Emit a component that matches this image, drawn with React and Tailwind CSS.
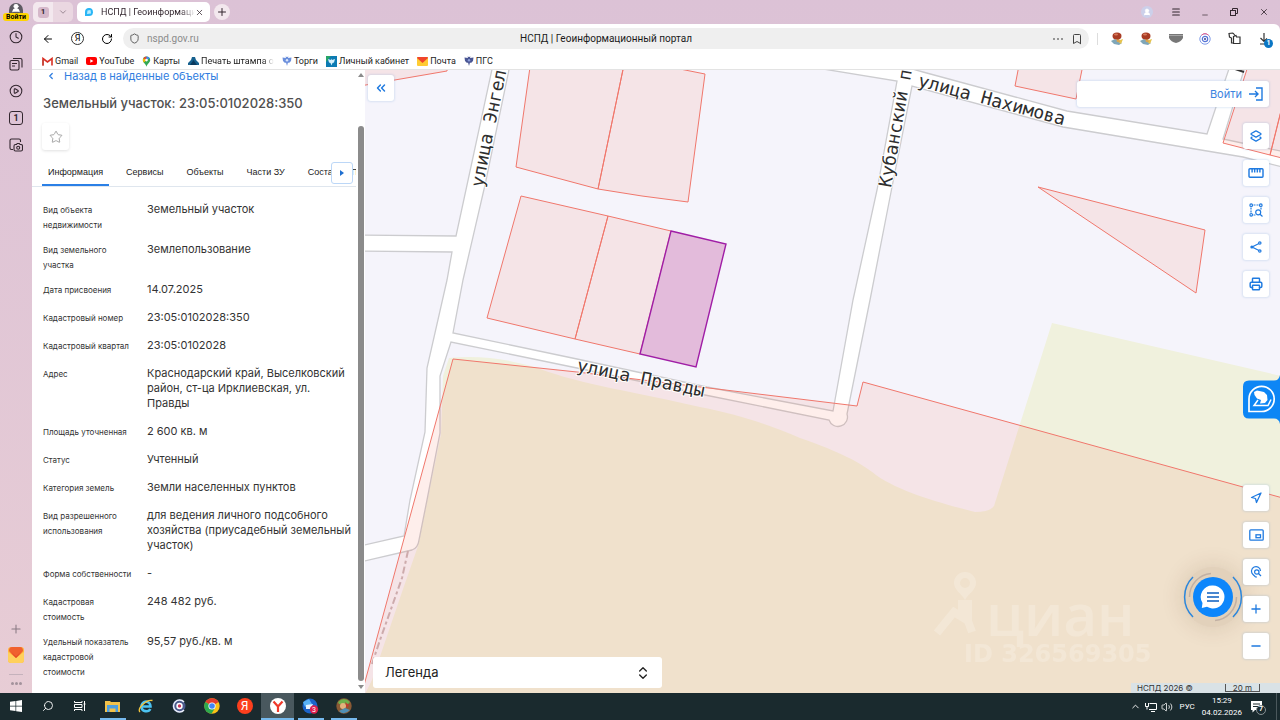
import React from "react";
import {
  ArrowLeft, RotateCw, Shield, Bookmark, X, Plus, ChevronDown, ChevronLeft, ChevronsLeft, ChevronUp, ChevronsUpDown,
  Clock, CirclePlay, Menu, Minus, Star, Layers2, Printer, Navigation, Search,
  Volume2, UserRound,
} from "lucide-react";

const bookmarks = [
  { name: "Gmail", icon: <GmailIcon /> },
  { name: "YouTube", icon: <YouTubeIcon /> },
  { name: "Карты", icon: <PinIcon /> },
  { name: "Печать штампа о", icon: <TentIcon />, fade: true },
  { name: "Торги", icon: <EagleIcon /> },
  { name: "Личный кабинет", icon: <CabinetIcon /> },
  { name: "Почта", icon: <MailIcon /> },
  { name: "ПГС", icon: <EagleIcon dark /> },
];

const facts = [
  ["Вид объекта недвижимости", "Земельный участок"],
  ["Вид земельного участка", "Землепользование"],
  ["Дата присвоения", "14.07.2025"],
  ["Кадастровый номер", "23:05:0102028:350"],
  ["Кадастровый квартал", "23:05:0102028"],
  ["Адрес", "Краснодарский край, Выселковский район, ст-ца Ирклиевская, ул. Правды"],
  ["Площадь уточненная", "2 600 кв. м"],
  ["Статус", "Учтенный"],
  ["Категория земель", "Земли населенных пунктов"],
  ["Вид разрешенного использования", "для ведения личного подсобного хозяйства (приусадебный земельный участок)"],
  ["Форма собственности", "-"],
  ["Кадастровая стоимость", "248 482 руб."],
  ["Удельный показатель кадастровой стоимости", "95,57 руб./кв. м"],
];

function GmailIcon() {
  return (
    <svg viewBox="0 0 11 9" className="h-[9px] w-[11px]">
      <path d="M1 8.500V1.500L5.500 5L10 1.500V8.500" fill="none" stroke="#d93025" strokeWidth="1.600" />
      <path d="M1 8.500V3" stroke="#c5483c" strokeWidth="1.600" />
    </svg>
  );
}
function YouTubeIcon() {
  return (
    <svg viewBox="0 0 11 8" className="h-2 w-[11px]">
      <rect width="11" height="8" rx="2" fill="#f00" />
      <path d="M4.300 2.200v3.600L7.400 4z" fill="#fff" />
    </svg>
  );
}
function PinIcon() {
  return (
    <svg viewBox="0 0 9 11" className="h-[11px] w-[9px]">
      <path d="M4.500 0.500A3.700 3.700 0 0 0 .8 4.200C.8 6.500 3.800 7.500 4.500 10.700C5.200 7.500 8.200 6.500 8.200 4.200A3.700 3.700 0 0 0 4.500.5z" fill="#34a853" />
      <path d="M4.500.5A3.700 3.700 0 0 0 1.300 2.300L4.500 4.200z" fill="#ea4335" />
      <path d="M4.500.5L4.500 4.200L7.700 2.300A3.700 3.700 0 0 0 4.500.5z" fill="#4285f4" />
      <path d="M1.300 2.300A3.700 3.700 0 0 0 1.700 6.500L4.500 4.200z" fill="#fbbc04" />
      <circle cx="4.500" cy="4.100" r="1.300" fill="#fff" />
    </svg>
  );
}
function TentIcon() {
  return (
    <svg viewBox="0 0 11 8" className="h-2 w-[11px]">
      <path d="M0 8V6L3 3L4 0H7L8 3L11 6V8z" fill="#17618f" />
      <path d="M2 8L5.500 3L9 8z" fill="#0b3a5e" />
    </svg>
  );
}
function EagleIcon({ dark }) {
  return (
    <svg viewBox="0 0 10 10" className="h-[10px] w-[10px]">
      <path
        d="M5 1L6.500 0.500L6 2L9.500 1.500L9 5L7 7L6 6.500L5 10L4 6.500L3 7L1 5L.5 1.500L4 2L3.500.5z"
        fill={dark ? "#4a5694" : "#6b8fdc"}
      />
      <circle cx="5" cy="4.300" r="1.200" fill={dark ? "#8ea0dc" : "#dbe6fb"} />
    </svg>
  );
}
function CabinetIcon() {
  return (
    <svg viewBox="0 0 11 11" className="h-[11px] w-[11px]">
      <rect width="11" height="11" fill="#0c7bb3" />
      <path d="M0 0H5L0 6z" fill="#27a567" />
      <path d="M2 3L5 4L5.500 2.500L6 4L9 3L8 6.500L6.500 7L5.500 9.500L4.500 7L3 6.500z" fill="#d5f0fb" />
    </svg>
  );
}
function MailIcon() {
  return (
    <svg viewBox="0 0 11 9" className="h-[9px] w-[11px]">
      <rect width="11" height="9" rx="1" fill="#ffcc33" />
      <path d="M0 1Q0 0 1 0H10Q11 0 11 1L5.500 6z" fill="#f0452c" />
    </svg>
  );
}

function IconButton({ label, className = "", children }) {
  return (
    <button type="button" aria-label={label} className={`flex items-center justify-center ${className}`}>
      {children}
    </button>
  );
}

function SideRail() {
  return (
    <aside className="flex w-8 shrink-0 flex-col items-center pt-[3px] pb-2 text-[#33272f]">
      <button type="button" aria-label="Войти в браузер" className="flex h-[18px] flex-col items-center">
        <span className="flex h-[10px] w-[14px] items-end justify-center overflow-hidden rounded-t-full bg-[#5d5a62]">
          <UserRound className="size-[10px] fill-white text-white" />
        </span>
        <span className="rounded-[3px] bg-[#ffd400] px-[3px] text-[7px] leading-2 font-bold text-black">Войти</span>
      </button>
      <nav className="mt-[9px] flex flex-col gap-[13px]">
        <IconButton label="История"><Clock className="size-[14px]" strokeWidth={1.8} /></IconButton>
        <IconButton label="Коллекции">
          <svg viewBox="0 0 14 14" className="size-[14px]" fill="none" stroke="currentColor" strokeWidth="1.100">
            <rect x="1" y="3.500" width="9" height="9.500" rx="1.500" />
            <path d="M4 1.500H11.500Q13 1.500 13 3V10.500M3 6.500H8M3 9H6" />
          </svg>
        </IconButton>
        <IconButton label="Видео"><CirclePlay className="size-[14px]" strokeWidth={1.8} /></IconButton>
        <button type="button" className="flex size-[14px] items-center justify-center rounded-[3px] border border-[#33272f] text-[9px] leading-none font-bold">1</button>
        <IconButton label="Скриншот">
          <svg viewBox="0 0 14 14" className="size-[14px]" fill="none" stroke="currentColor" strokeWidth="1.100">
            <path d="M4 11.500H2.500Q1 11.500 1 10V2.500Q1 1 2.500 1H10Q11.500 1 11.500 2.500V4" />
            <path d="M6.500 6.500H7.500L8.200 5.500H10.300L11 6.500H12Q13.500 6.500 13.500 8V11.500Q13.500 13 12 13H6.500Q5 13 5 11.500V8Q5 6.500 6.500 6.500z" />
            <circle cx="9.200" cy="9.700" r="1.500" />
          </svg>
        </IconButton>
      </nav>
      <div className="flex-1" />
      <div className="flex flex-col items-center gap-[11px] text-[#8a7a84]">
        <IconButton label="Добавить"><Plus className="size-[14px]" strokeWidth={1.8} /></IconButton>
        <IconButton label="Почта">
          <svg viewBox="0 0 16 16" className="size-4">
            <rect width="16" height="16" rx="3" fill="#ffb83f" />
            <path d="M1 4Q1 0 4 0H12Q15 0 15 4L8 12z" fill="#f0602f" />
            <path d="M0 5L8 11L16 5V13Q16 16 13 16H3Q0 16 0 13z" fill="#ffd05c" />
            <path d="M3 4.500L8 9.500L13 4.500L8 11z" fill="#e34a25" />
          </svg>
        </IconButton>
        <div className="flex flex-col items-center gap-[7px]">
          <span className="h-px w-[14px] bg-[#c5b2bc]" />
          <span className="flex gap-px">
            <i className="size-[3px] rounded-full bg-[#a3929c]" />
            <i className="size-[3px] rounded-full bg-[#a3929c]" />
            <i className="size-[3px] rounded-full bg-[#a3929c]" />
          </span>
        </div>
      </div>
    </aside>
  );
}

function TabStrip() {
  return (
    <div className="flex h-6 items-center pl-px text-[#33272f]">
      <div className="flex h-5 overflow-hidden rounded-[5px] bg-[#ead7e1]">
        <button type="button" className="flex w-5 items-center justify-center bg-[#f3e8ee] text-[8px] font-bold">
          <span className="flex size-[11px] items-center justify-center rounded-[3px] bg-[#d5b8ca]">1</span>
        </button>
        <IconButton label="Группы вкладок" className="w-5"><ChevronDown className="size-[10px] text-[#8d7b86]" /></IconButton>
      </div>
      <div className="ml-1 flex h-5 w-[133px] items-center rounded-[5px] bg-white pr-[6px] pl-[7px]">
        <svg viewBox="0 0 10 10" className="size-[10px] shrink-0">
          <path d="M1 9V4.500A4 4 0 1 1 5 9z" fill="#29b6f6" />
          <path d="M3 7L7 6.500L6.500 3L3.500 3.500z" fill="#b9ecff" />
        </svg>
        <span className="ml-[7px] flex-1 overflow-hidden mask-r-from-85% text-[9px] leading-4 whitespace-nowrap">НСПД | Геоинформаци</span>
        <IconButton label="Закрыть вкладку"><X className="size-[9px]" /></IconButton>
      </div>
      <IconButton label="Новая вкладка" className="ml-1 size-4 rounded-full bg-[#f3e8ee]"><Plus className="size-3" /></IconButton>
      <div className="ml-auto flex items-center">
        <IconButton label="Профиль" className="w-[29px]">
          <span className="flex size-3 items-center justify-center rounded-full bg-[#ccd0ea]"><UserRound className="size-2 fill-white text-white" /></span>
        </IconButton>
        <IconButton label="Меню" className="w-[29px]"><Menu className="size-[10px]" strokeWidth={2.5} /></IconButton>
        <IconButton label="Свернуть" className="w-[29px] pt-[5px]"><Minus className="size-2" /></IconButton>
        <IconButton label="Восстановить" className="w-[29px]">
          <svg viewBox="0 0 8 8" className="size-2" fill="none" stroke="currentColor"><rect x=".5" y="2.500" width="5" height="5" /><path d="M2.500 2.500V.5H7.500V5.500H5.500" /></svg>
        </IconButton>
        <IconButton label="Закрыть" className="w-[32px]"><X className="size-[10px]" /></IconButton>
      </div>
    </div>
  );
}

function StampIcon() {
  return (
    <svg viewBox="0 0 14 14" className="size-[14px]">
      <path d="M1 9L5 7L12 11L9 13L4 12z" fill="#7fa6b8" />
      <path d="M7 9L13 7L11 12z" fill="#e7c34c" />
      <path d="M6 6H9L10 10H7z" fill="#d8a552" />
      <ellipse cx="7" cy="4" rx="4.500" ry="3.600" fill="#a93c24" />
      <ellipse cx="6" cy="2.600" rx="2" ry="1" fill="#d77a5c" />
    </svg>
  );
}

function AddressBar() {
  return (
    <div className="flex h-[29px] items-center pl-[9px]">
      <IconButton label="Назад" className="size-[14px]"><ArrowLeft className="size-3" /></IconButton>
      <button type="button" className="ml-4 flex size-[13px] items-center justify-center rounded-full border border-[#333] text-[9px] leading-none">Я</button>
      <IconButton label="Обновить" className="ml-4 size-[14px]"><RotateCw className="size-3" /></IconButton>
      <div className="ml-[9px] grid h-[21px] flex-1 grid-cols-[1fr_auto_1fr] items-center rounded-full bg-[#efefef] px-[6px]">
        <label className="flex items-center gap-[7px]">
          <Shield className="size-[11px] text-[#555]" />
          <input aria-label="Адрес" defaultValue="nspd.gov.ru" className="w-40 bg-transparent text-[10px] leading-4 text-[#8b8b8b] outline-none" />
        </label>
        <span className="text-[10px] leading-4 text-[#1a1a1a]">НСПД | Геоинформационный портал</span>
        <div className="flex items-center justify-end gap-2 text-[#444]">
          <span className="flex gap-[2px]"><i className="size-[2px] rounded-full bg-[#777]" /><i className="size-[2px] rounded-full bg-[#777]" /><i className="size-[2px] rounded-full bg-[#777]" /></span>
          <IconButton label="В закладки"><Bookmark className="size-3" /></IconButton>
        </div>
      </div>
      <span className="ml-2 h-3 w-px bg-[#ddd]" />
      <div className="mr-[2px] ml-1 flex items-center text-[#333]">
        <IconButton label="Штамп" className="w-[29px]"><StampIcon /></IconButton>
        <IconButton label="Штамп 2" className="w-[30px]"><StampIcon /></IconButton>
        <IconButton label="Карман" className="w-[29px]">
          <svg viewBox="0 0 14 9" className="h-[9px] w-[14px]"><path d="M0 0H14V4Q12 8 7 9Q2 8 0 4z" fill="#777" /><path d="M0 1.500H14" stroke="#a5a5a5" /></svg>
        </IconButton>
        <IconButton label="Алиса" className="w-[29px]">
          <svg viewBox="0 0 12 12" className="size-3" fill="none"><circle cx="6" cy="6" r="5.200" stroke="#7f9be8" /><path d="M2.500 2.200A5.200 5.200 0 0 1 9.500 2.200" stroke="#ef5d87" /><circle cx="6" cy="6" r="2.700" stroke="#5674d6" strokeWidth="1.200" /><circle cx="6" cy="6" r="1" fill="#3d3f8f" /></svg>
        </IconButton>
        <IconButton label="Расширения" className="w-[30px]">
          <svg viewBox="0 0 13 13" className="size-[13px]" fill="none" stroke="currentColor" strokeWidth="1.200"><path d="M5.500 4.500L8 3.500L8.500 5H12V11.500H5.500zM5 1L1 1.500L1.500 5L3.500 6V11H5.500M5 1L7 3.500" /></svg>
        </IconButton>
        <button type="button" aria-label="Загрузки" className="relative flex w-[29px] items-center justify-center">
          <svg viewBox="0 0 12 12" className="size-3" fill="none" stroke="currentColor" strokeWidth="1.200"><path d="M6 0V8M2.500 5L6 8.500L9 5.500M2 11H7" /></svg>
          <span className="absolute -bottom-[3px] left-[15px] flex size-[9px] items-center justify-center rounded-full bg-[#0a76c4] text-[7px] font-bold text-white">1</span>
        </button>
      </div>
    </div>
  );
}

function Bookmarks() {
  return (
    <nav className="flex h-[17px] items-center gap-2 border-b border-[#e3e3e3] pl-[10px] text-[9px] leading-4 text-[#1c1c1c]">
      {bookmarks.map((b) => (
        <a key={b.name} href="#" className="flex items-center gap-[2px] whitespace-nowrap">
          {b.icon}
          <span className={b.fade ? "mask-r-from-85%" : ""}>{b.name}</span>
        </a>
      ))}
    </nav>
  );
}

function ObjectPanel() {
  return (
    <section className="flex w-[333px] shrink-0 bg-white font-['Inter',sans-serif]">
      <div className="flex min-w-0 flex-1 flex-col overflow-hidden">
        <a href="#" className="ml-[14px] flex h-3 items-center gap-2 text-[11px] leading-3 text-[#2f7de0]">
          <ChevronLeft className="size-[10px]" strokeWidth={3} />
          Назад в найденные объекты
        </a>
        <h1 className="mt-[11px] ml-[11px] text-[13px] leading-5 font-medium text-[#505050]">Земельный участок: 23:05:0102028:350</h1>
        <IconButton label="В избранное" className="mt-[10px] ml-[10px] size-[27px] rounded-[3px] text-[#9a9a9a] shadow-[0_1px_3px_rgba(0,0,0,0.12)]">
          <Star className="size-[14px]" strokeWidth={1.5} />
        </IconButton>
        <div className="relative mt-2 border-b border-[#dfe6ee]">
          <div role="tablist" className="flex gap-[11px] overflow-hidden pl-[10px] font-['Liberation_Sans',sans-serif] text-[9px] leading-[12px] whitespace-nowrap text-[#222]">
            <button type="button" role="tab" aria-selected="true" className="border-b-2 border-[#2b80e6] px-[6px] pt-2 pb-[6px]">Информация</button>
            <button type="button" role="tab" className="px-[6px] pt-2 pb-2">Сервисы</button>
            <button type="button" role="tab" className="px-[6px] pt-2 pb-2">Объекты</button>
            <button type="button" role="tab" className="px-[6px] pt-2 pb-2">Части ЗУ</button>
            <button type="button" role="tab" className="px-[6px] pt-2 pb-2">Состав ЕЗП</button>
          </div>
          <IconButton label="Ещё вкладки" className="absolute top-1 right-[3px] size-[22px] rounded-[3px] border border-[#bcd7f7] bg-white">
            <svg viewBox="0 0 4 6" className="h-[6px] w-1"><path d="M0 0L4 3L0 6z" fill="#1f6fd0" /></svg>
          </IconButton>
        </div>
        <dl className="mt-[15px] flex flex-col gap-[10px] pl-[11px] text-[#333]">
          {facts.map(([k, v]) => (
            <div key={k} className="flex">
              <dt className="-mb-px w-[104px] shrink-0 pt-px pr-[14px] text-[8px] leading-[15px]">{k}</dt>
              <dd className="w-[205px] pb-[3px] text-[11px] leading-[15px]">{v}</dd>
            </div>
          ))}
        </dl>
      </div>
      <div aria-hidden="true" className="flex w-[9px] flex-col items-center pt-[3px] pb-1">
        <svg viewBox="0 0 6 4" className="h-1 w-[6px]"><path d="M0 4L3 0L6 4z" fill="#8b8b8b" /></svg>
        <div className="mt-[49px] w-[6px] flex-1 rounded-full bg-[#8b8b8b]" />
        <svg viewBox="0 0 6 4" className="mt-1 h-1 w-[6px]"><path d="M0 0L3 4L6 0z" fill="#8b8b8b" /></svg>
      </div>
    </section>
  );
}

function MapCanvas() {
  const parcel = { fill: "rgba(245,85,60,0.1)", stroke: "#f0776c", strokeWidth: 1 };
  return (
    <svg viewBox="365 70 915 623" preserveAspectRatio="xMinYMin slice" className="absolute inset-0 h-full w-full bg-[#f5f4fb]">
      <path
        d="M1052 323L1290 378V700H362L372 680L402 592L418 546L441 434L443 376L449 358C480 355 510 359 540 369C580 384 640 393 700 407C740 415 770 425 800 438C840 452 860 462 876 475C900 492 940 503 975 512Q990 512 994 506z"
        fill="#f0f1dd"
      />
      <path
        d="M494 60L456 236L360 235V251L452 252L447 280L427 368L425 432L410 500L404 536L360 546V562L412 550Q418 548 419 540L427 500L440 433V376L451 342L577 368L700 394L829 420A9 9 0 0 0 847 414L870 300L892 187L912 86L1063 127L1243 157L1290 169V153L1242 143L1223 139L1247 60H1232L1216 107L1207 134L1067 111L923 72L880 60H770L823 69L897 81L877 190L853 300L833 411L707 387L577 359L453 333L463 280L485 185L511 60z"
        fill="#fff" stroke="#cccccf" strokeWidth="1.300"
      />
      <path d="M408 551L402 578L390 612L380 640L372 664" fill="none" stroke="#c9b5b9" strokeWidth="2" strokeDasharray="7 3 3 3" />
      <g {...parcel}>
        <path d="M360 86L447 71L448 60H360z" />
        <path d="M531 60L516 167L598 189L625 60z" />
        <path d="M625 60L598 189L642 196L688 202L705 74L640 61z" />
        <path d="M521 196L487 318L575 339L608 216z" />
        <path d="M608 216L575 339L640 354L671 231z" />
        <path d="M1020 60L1015 86L1076 99L1084 60z" />
        <path d="M1250 60L1223 143L1270 155L1290 75V60z" />
        <path d="M1290 75L1270 155L1290 160z" />
        <path d="M1038 187L1205 230L1196 293z" />
        <path d="M453 359L577 372L857 406L863 382L1290 500V700H360z" />
      </g>
      <path d="M671 231L726 244L696 367L640 354z" fill="#e3bbdb" stroke="#a01ea6" strokeWidth="1.400" />
      <defs>
        <path id="engels" d="M483 188C488 160 493 135 498 112L513 40" />
        <path id="kuban" d="M891 188L914 58" />
      </defs>
      <g
        fill="#2e2e2e" stroke="#fff" strokeWidth="2" strokeLinejoin="round" paintOrder="stroke"
        className="font-['DejaVu_Sans_Mono',monospace] text-[18px]"
      >
        <text><textPath href="#engels">улица Энгельса</textPath></text>
        <text><textPath href="#kuban">Кубанский пер</textPath></text>
        <text transform="translate(917 86) rotate(15)">улица Нахимова</text>
        <text transform="translate(576 371) rotate(11.500)">улица Правды</text>
      </g>
      <path d="M1235 69L1244 72" stroke="#333" strokeWidth="2" />
      <g fill="#fff" opacity="0.2">
        <path fillRule="evenodd" d="M965 572A11 11 0 0 1 976 583C976 590 968 594 965 600C962 594 954 590 954 583A11 11 0 0 1 965 572zM965 578A5 5 0 1 0 965 588A5 5 0 1 0 965 578z" />
        <path d="M937 633L954 612L962 617V604H968V621L972 632" fill="none" stroke="#fff" strokeWidth="8" />
        <text x="986" y="636" className="font-['Open_Sans',sans-serif] text-[58px] font-semibold">циан</text>
        <text x="964" y="662" className="font-['DejaVu_Sans',sans-serif] text-[24px] font-bold">ID 326569305</text>
      </g>
    </svg>
  );
}

function Tool({ label, children }) {
  return (
    <IconButton label={label} className="size-[26px] rounded-[3px] bg-white text-[#1f7ae0] shadow-[0_0_2px_1px_rgba(110,160,215,0.2)]">
      {children}
    </IconButton>
  );
}

function MapArea() {
  return (
    <main className="relative min-w-0 flex-1 overflow-hidden font-['Inter',sans-serif]">
      <MapCanvas />
      <div className="absolute inset-0 flex justify-between">
        <div className="flex flex-col items-start justify-between pt-[5px] pb-[5px]">
          <span className="ml-[3px]">
            <Tool label="Свернуть панель"><ChevronsLeft className="size-[14px]" strokeWidth={2.5} /></Tool>
          </span>
          <button type="button" className="ml-2 flex h-[31px] w-[289px] items-center justify-between rounded-[3px] bg-white pr-[11px] pl-3 text-[13px] text-[#222]">
            Легенда
            <ChevronsUpDown className="size-4" strokeWidth={2} />
          </button>
        </div>
        <div className="flex flex-col items-end">
          <button type="button" className="mt-[11px] mr-[11px] flex h-[26px] w-48 items-center justify-end gap-[7px] rounded-[3px] bg-white pr-[6px] text-[11px] text-[#3b83e0] shadow-[0_0_2px_1px_rgba(110,160,215,0.2)]">
            Войти
            <svg viewBox="0 0 14 14" className="size-[14px]" fill="none" stroke="#1f7ae0" strokeWidth="1.400"><path d="M7 1H13V13H7M0 7H9M6 4L9 7L6 10" /></svg>
          </button>
          <div className="mt-4 mr-[11px] flex flex-col gap-[11px]">
            <Tool label="Слои"><Layers2 className="size-3" strokeWidth={2.5} /></Tool>
            <Tool label="Линейка">
              <svg viewBox="0 0 14 9" className="h-[10px] w-4" fill="none" stroke="currentColor" strokeWidth="1.300"><rect x=".7" y=".7" width="12.600" height="7.600" rx=".8" /><path d="M3.500 1V4M5.800 1V4M8.200 1V4M10.500 1V4" /></svg>
            </Tool>
            <Tool label="Поиск по области">
              <svg viewBox="0 0 14 14" className="size-[14px]" fill="none" stroke="currentColor" strokeWidth="1.200"><circle cx="2.200" cy="2.200" r="1.300" /><circle cx="11.800" cy="2.200" r="1.300" /><circle cx="2.200" cy="11.800" r="1.300" /><path d="M4.500 2H9.500" strokeDasharray="2 1" /><path d="M2 4.500V9.500" strokeDasharray="2 1" /><path d="M12 4.500V6.500M4.500 12H6.500" /><circle cx="9.200" cy="9.300" r="2.500" /><path d="M11 11.200L13.500 13.500" /></svg>
            </Tool>
            <Tool label="Поделиться">
              <svg viewBox="0 0 12 12" className="size-3" fill="none" stroke="currentColor" strokeWidth="1.200"><path d="M9 2.500L2 6L9 9.500" /><circle cx="9.800" cy="2" r="1.200" /><circle cx="9.800" cy="10" r="1.200" /><circle cx="1.900" cy="6" r="1" fill="currentColor" /></svg>
            </Tool>
            <Tool label="Печать"><Printer className="size-[14px]" strokeWidth={2.5} /></Tool>
          </div>
          <div className="mt-[78px]">
            <IconButton label="Помощник" className="h-[49px] w-[37px]">
              <svg viewBox="0 0 37 49" className="h-[49px] w-[37px]">
                <path d="M37 0Q36 5.500 31 5.500H6Q0 5.500 0 11.500V37.500Q0 43.500 6 43.500H31Q36 43.500 37 49z" fill="#0d86f5" />
                <path d="M6 36.500V24A12.600 12.600 0 1 1 18.500 36.500z" fill="none" stroke="#fff" strokeWidth="1.700" />
                <path d="M11 17L14 15.500L21 17L24 20L24.500 25L22 28L17 28.500L18 25L14 23.500L11.500 20z" fill="#fff" />
                <path d="M15 25L11 30.500H25L28 24.500" fill="none" stroke="#fff" strokeWidth="1.500" />
              </svg>
            </IconButton>
          </div>
          <div className="mt-auto flex items-end">
            <IconButton label="Чат" className="mb-8 size-[60px] rounded-full bg-[rgba(90,50,20,0.09)] shadow-[0_0_20px_4px_rgba(90,50,20,0.1)]">
              <svg viewBox="0 0 60 60" className="size-[60px]">
                <circle cx="30" cy="30" r="20" fill="#0d86fb" />
                <path d="M30 18.500A11.500 11.500 0 1 1 24 39.800L18.800 41L19.500 36A11.500 11.500 0 0 1 30 18.500z" fill="#fff" />
                <path d="M24 26H36M24 30H36M24 34H36" stroke="#0d5fc0" strokeWidth="1.500" />
                <path d="M10 10A28 28 0 0 0 10 50M50 10A28 28 0 0 1 50 50" fill="none" stroke="#2a86dc" strokeWidth="1.500" />
                <path d="M6.500 30A23.500 23.500 0 0 1 28 6.600M53.500 30A23.500 23.500 0 0 1 32 53.400" fill="none" stroke="#c2b1a4" strokeWidth="1.500" />
              </svg>
            </IconButton>
            <div className="mr-[11px] flex flex-col gap-[11px]">
              <Tool label="Моё местоположение"><Navigation className="size-3" strokeWidth={2.5} /></Tool>
              <Tool label="Обзорная карта">
                <svg viewBox="0 0 15 12" className="h-3 w-[15px]" fill="none" stroke="currentColor" strokeWidth="1.300"><rect x=".8" y=".8" width="13.400" height="10.400" rx="1" /><rect x="7" y="5.800" width="4.500" height="2.900" /></svg>
              </Tool>
              <Tool label="Поиск по точке">
                <svg viewBox="0 0 12 12" className="size-3" fill="none" stroke="currentColor" strokeWidth="1.200"><path d="M10.500 5A4.500 4.500 0 1 0 3 8.500L5.500 11H7" /><circle cx="6.800" cy="6" r="2.200" /><path d="M8.500 7.500L11 10" /></svg>
              </Tool>
              <Tool label="Приблизить"><Plus className="size-[14px]" strokeWidth={2.2} /></Tool>
              <Tool label="Отдалить"><Minus className="size-[14px]" strokeWidth={2.2} /></Tool>
            </div>
          </div>
          <div className="mt-6 flex h-[10px] w-[149px] items-center gap-[32px] bg-[#d9e2e6] pl-[6px] text-[8px] leading-[10px] text-[#333]">
            НСПД 2026 ©
            <span className="h-2 w-[35px] border-x border-b border-[#555] text-center leading-[8px]">20 m</span>
          </div>
        </div>
      </div>
    </main>
  );
}

function TaskButton({ label, open, active, pinned, children }) {
  return (
    <button type="button" aria-label={label} className={`flex h-full flex-col items-center ${pinned ? "w-[33px]" : "w-8"} ${active ? "bg-[#49585e]" : ""}`}>
      <span className="flex flex-1 items-center justify-center">{children}</span>
      <span className={`h-[2px] ${active ? "w-full" : "w-[26px]"} ${open ? "bg-[#76b9ed]" : ""}`} />
    </button>
  );
}

function Taskbar() {
  return (
    <footer className="flex h-[27px] shrink-0 items-center bg-[#1a2a2e] text-white">
      <TaskButton label="Пуск">
        <svg viewBox="0 0 12 12" className="size-3" fill="#fff"><path d="M0 1.700L5.500 1V5.700H0zM6.200.9L12 0V5.700H6.200zM0 6.400H5.500V11.100L0 10.300zM6.200 6.400H12V12L6.200 11.200z" /></svg>
      </TaskButton>
      <TaskButton label="Поиск"><Search className="size-3 -scale-x-100" strokeWidth={1.8} /></TaskButton>
      <TaskButton label="Представление задач">
        <svg viewBox="0 0 12 12" className="size-3" fill="none" stroke="#fff"><path d="M.5 1V2.500H8V1M.5 11V9.500H8V11M.5 4.500H8V7.500H.5zM10.500 1V11M9.500 4H11.500" /></svg>
      </TaskButton>
      <TaskButton label="Проводник" open pinned>
        <svg viewBox="0 0 15 12" className="h-3 w-[15px]"><path d="M0 1H5L6 2H15V12H0z" fill="#f2c14a" /><path d="M2 5H13V12H2z" fill="#4d9ee0" /><path d="M4.500 8.500H10.500V12H4.500z" fill="#f2c14a" /></svg>
      </TaskButton>
      <TaskButton label="Internet Explorer" pinned>
        <svg viewBox="0 0 16 16" className="size-4" fill="none"><path d="M3.500 8.500H12.500C12.500 2 3.500 2 3.500 8.500C3.500 14 10.500 14.500 12.300 11" stroke="#4cc3f2" strokeWidth="2.600" /><path d="M2 14C-1 11 8 1 14.500 2.500" stroke="#f3c53c" strokeWidth="1.300" /></svg>
      </TaskButton>
      <TaskButton label="КриптоПро" pinned>
        <svg viewBox="0 0 14 14" className="size-[14px]" fill="none"><circle cx="7" cy="7" r="6.500" fill="#4a5a8c" /><path d="M12 3A6 6 0 1 0 12 11" stroke="#e9eefb" strokeWidth="1.500" /><circle cx="7.500" cy="7" r="3.200" fill="#fff" /><circle cx="7.500" cy="7" r="1.700" fill="#c8375c" /></svg>
      </TaskButton>
      <TaskButton label="Chrome" pinned>
        <svg viewBox="0 0 16 16" className="size-4"><circle cx="8" cy="8" r="7.700" fill="#fbc116" /><path d="M8 8L1.300 4.100A7.700 7.700 0 0 1 14.700 4.100z" fill="#e33b2e" /><path d="M8 8L1.300 4.100A7.700 7.700 0 0 0 7.500 15.700L11 10z" fill="#2da94f" /><circle cx="8" cy="8" r="3.600" fill="#fff" /><circle cx="8" cy="8" r="2.800" fill="#4285f4" /></svg>
      </TaskButton>
      <TaskButton label="Яндекс" pinned><span className="flex size-4 items-center justify-center rounded-full bg-[#fc3f1d] text-[12px] leading-none">Я</span></TaskButton>
      <TaskButton label="Яндекс Браузер" open active pinned>
        <svg viewBox="0 0 16 16" className="size-4"><circle cx="8" cy="8" r="8" fill="#fff" /><path d="M3.500 3.500L8 8.500V14M12.500 3.500L8 8.500" fill="none" stroke="#f0392b" strokeWidth="2.200" /></svg>
      </TaskButton>
      <TaskButton label="Почтовый клиент" open pinned>
        <svg viewBox="0 0 17 16" className="h-4 w-[17px]"><circle cx="8" cy="8" r="7.500" fill="#1b63c9" /><path d="M1 4L7 1L10 6L3 9z" fill="#59b2f5" /><path d="M4 7L11 6L9 11L4 11z" fill="#e8f3fd" /><circle cx="12" cy="11.500" r="4.200" fill="#e01f4d" /><text x="12" y="14" textAnchor="middle" fill="#fff" fontSize="7">3</text></svg>
      </TaskButton>
      <TaskButton label="Игра" open pinned>
        <svg viewBox="0 0 16 16" className="size-4"><circle cx="8" cy="8" r="7.700" fill="#8a5a34" /><path d="M2 4Q8-2 14 4L12 6H3z" fill="#6fb04c" /><circle cx="7" cy="8" r="3" fill="#e5b27d" /><path d="M3 13L9 10L14 12Q8 18 3 13z" fill="#4f8fb5" /><path d="M9 4L13 7L11 10z" fill="#c4392c" /></svg>
      </TaskButton>
      <div className="ml-auto flex h-full items-center">
        <ChevronUp className="size-[11px]" />
        <svg viewBox="0 0 12 10" className="ml-1 h-[10px] w-3" fill="none" stroke="#fff"><path d="M4.500 1.500H11.500V7.500H4M.5 1V4.500H3.500V1M2 5V7.500M6 9.500H10" /></svg>
        <Volume2 className="ml-1 size-3" strokeWidth={1.6} />
        <span className="ml-[7px] text-[8px]">РУС</span>
        <span className="ml-[7px] text-center text-[8px] leading-3">15:29<br />04.02.2026</span>
        <button type="button" aria-label="Уведомления" className="relative ml-[9px] size-[14px]">
          <svg viewBox="0 0 12 12" className="size-3"><path d="M0 0H11V9H4L1.500 11.500V9H0z" fill="#fff" /><path d="M2 3H9M2 5.500H9" stroke="#1a2a2e" /></svg>
          <span className="absolute top-[5px] left-[5px] flex size-[10px] items-center justify-center rounded-full border border-[#8a9295] bg-[#1a2a2e] text-[7px] leading-none font-bold">7</span>
        </button>
        <span className="mr-[3px] ml-[11px] h-full w-px bg-[#4b585c]" />
      </div>
    </footer>
  );
}

export default function App() {
  return (
    <div className="flex h-screen flex-col overflow-hidden bg-[#dfc3d5] bg-linear-to-b from-[#dcc2d6] to-[#e8cdd5] font-['Roboto',sans-serif]">
      <div className="flex min-h-0 flex-1">
        <SideRail />
        <div className="flex min-w-0 flex-1 flex-col">
          <TabStrip />
          <div className="flex min-h-0 flex-1 flex-col overflow-hidden rounded-t-[6px] bg-white">
            <AddressBar />
            <Bookmarks />
            <div className="flex min-h-0 flex-1">
              <ObjectPanel />
              <MapArea />
            </div>
          </div>
        </div>
      </div>
      <Taskbar />
    </div>
  );
}
